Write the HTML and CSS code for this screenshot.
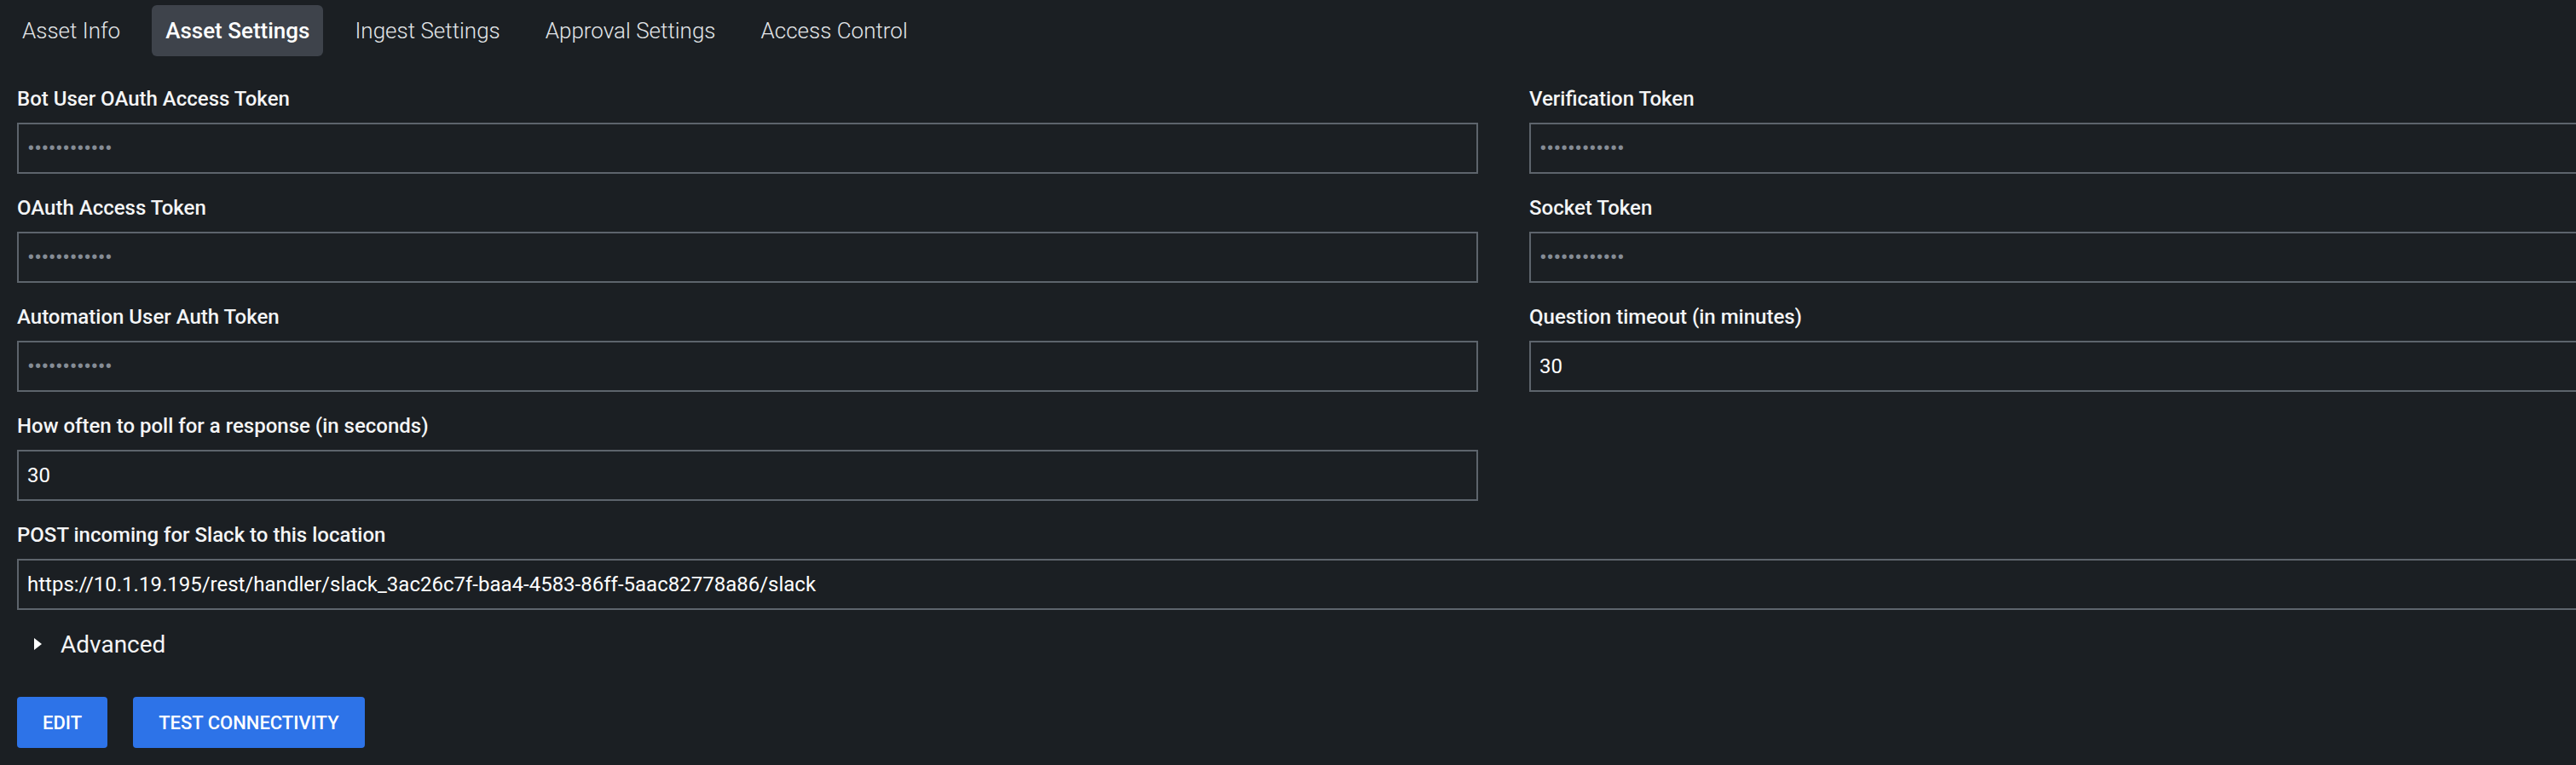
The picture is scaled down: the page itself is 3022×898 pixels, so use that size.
FILE: index.html
```html
<!DOCTYPE html>
<html lang="en">
<head>
<meta charset="utf-8">
<title>Asset Settings</title>
<link rel="stylesheet" href="styles.css">
</head>
<body>
<div class="page">
  <nav class="tabs">
    <div class="tab">Asset Info</div>
    <div class="tab active">Asset Settings</div>
    <div class="tab">Ingest Settings</div>
    <div class="tab">Approval Settings</div>
    <div class="tab">Access Control</div>
  </nav>

  <form class="form">
    <div class="field">
      <label class="label">Bot User OAuth Access Token</label>
      <div class="input secret">••••••••••••</div>
    </div>
    <div class="field">
      <label class="label">Verification Token</label>
      <div class="input secret">••••••••••••</div>
    </div>
    <div class="field">
      <label class="label">OAuth Access Token</label>
      <div class="input secret">••••••••••••</div>
    </div>
    <div class="field">
      <label class="label">Socket Token</label>
      <div class="input secret">••••••••••••</div>
    </div>
    <div class="field">
      <label class="label">Automation User Auth Token</label>
      <div class="input secret">••••••••••••</div>
    </div>
    <div class="field">
      <label class="label">Question timeout (in minutes)</label>
      <div class="input">30</div>
    </div>
    <div class="field">
      <label class="label">How often to poll for a response (in seconds)</label>
      <div class="input">30</div>
    </div>
    <div class="field wide">
      <label class="label">POST incoming for Slack to this location</label>
      <div class="input">https://10.1.19.195/rest/handler/slack_3ac26c7f-baa4-4583-86ff-5aac82778a86/slack</div>
    </div>
  </form>

  <div class="advanced">
    <span class="caret"></span>
    <span>Advanced</span>
  </div>

  <div class="actions">
    <button class="btn" type="button">EDIT</button>
    <button class="btn" type="button">TEST CONNECTIVITY</button>
  </div>
</div>
</body>
</html>
```

FILE: styles.css
```css
html, body {
  margin: 0;
  padding: 0;
  overflow: hidden;
}

body {
  background: #1b1f23;
  color: #ffffff;
  font-family: Roboto, "Liberation Sans", sans-serif;
  width: 3022px;
  height: 898px;
}

.page {
  padding: 6px 0 20px 20px;
}

.tabs {
  display: flex;
  gap: 21px;
  margin-left: -10px;
}

.tab {
  height: 60px;
  padding: 0 16px;
  display: flex;
  align-items: center;
  font-size: 26px;
  font-weight: 300;
  color: #e2e5e8;
  border-radius: 6px;
}

.tab.active {
  background: #3e434b;
  color: #ffffff;
  font-weight: 500;
}

.form {
  margin-top: 36px;
  display: grid;
  grid-template-columns: 1714px 1714px;
  column-gap: 60px;
}

.field {
  display: flex;
  flex-direction: column;
  margin-bottom: 26px;
}

.field.wide {
  grid-column: 1 / span 2;
}

.label {
  font-size: 24px;
  line-height: 28px;
  font-weight: 500;
  color: #f4f5f6;
  margin-bottom: 14px;
}

.input {
  box-sizing: border-box;
  height: 60px;
  border: 2px solid #5d646c;
  padding: 0 10px;
  display: flex;
  align-items: center;
  font-size: 24px;
  color: #ffffff;
  white-space: nowrap;
}

.input.secret {
  color: #858c95;
  font-size: 26px;
  letter-spacing: -0.5px;
  padding-left: 10px;
}

.advanced {
  display: flex;
  align-items: center;
  gap: 22px;
  padding-left: 20px;
  margin-top: -2px;
  height: 32px;
  font-size: 28px;
  font-weight: 400;
  color: #f4f5f6;
}

.caret {
  width: 0;
  height: 0;
  border-top: 7px solid transparent;
  border-bottom: 7px solid transparent;
  border-left: 9px solid #ffffff;
}

.actions {
  display: flex;
  gap: 30px;
  margin-top: 46px;
}

.btn {
  height: 60px;
  padding: 0 30px;
  border: none;
  border-radius: 4px;
  background: #2d73e8;
  color: #ffffff;
  font-family: Roboto, "Liberation Sans", sans-serif;
  font-size: 22px;
  font-weight: 500;
}
```
